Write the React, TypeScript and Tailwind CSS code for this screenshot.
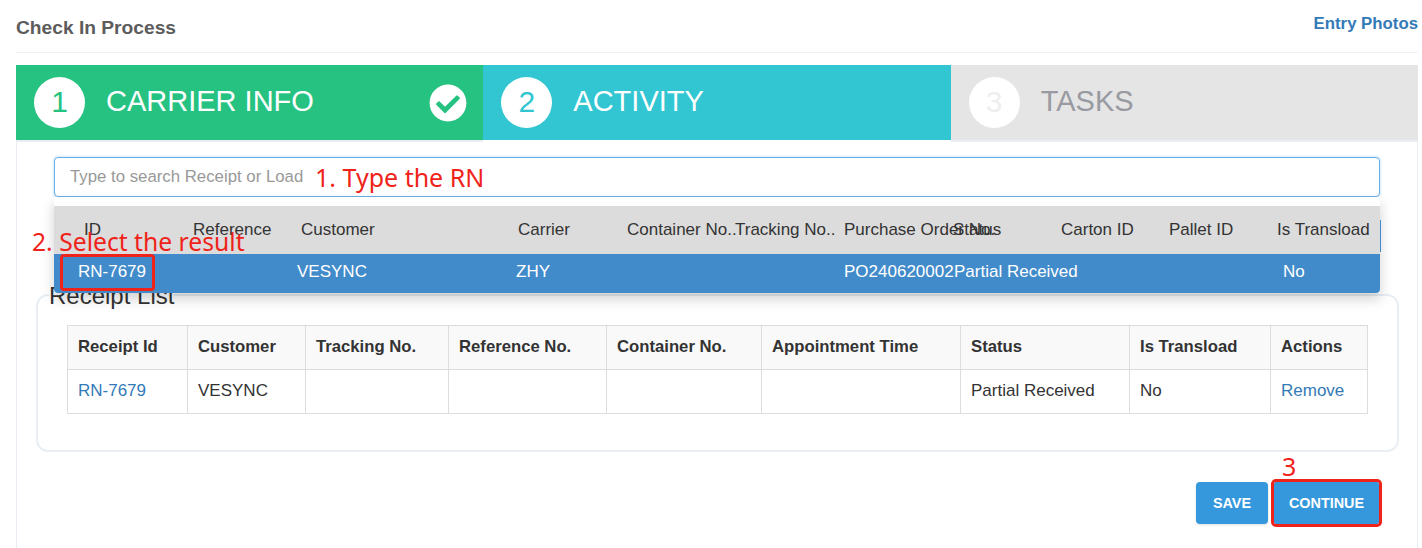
import { FaCheckCircle } from "react-icons/fa";

const headCols = [
  { label: "ID", w: "w-[109px]" },
  { label: "Reference", w: "w-[108px]" },
  { label: "Customer", w: "w-[217px]" },
  { label: "Carrier", w: "w-[109px]" },
  { label: "Container No..", w: "w-[108px]" },
  { label: "Tracking No..", w: "w-[109px]" },
  { label: "Purchase Order No.", w: "w-[109px]" },
  { label: "Status", w: "w-[108px]" },
  { label: "Carton ID", w: "w-[108px]" },
  { label: "Pallet ID", w: "w-[108px]" },
  { label: "Is Transload", w: "w-[92px]" },
];

const tableCols = [
  { label: "Receipt Id", w: "w-[120px]" },
  { label: "Customer", w: "w-[118px]" },
  { label: "Tracking No.", w: "w-[143px]" },
  { label: "Reference No.", w: "w-[158px]" },
  { label: "Container No.", w: "w-[155px]" },
  { label: "Appointment Time", w: "w-[199px]" },
  { label: "Status", w: "w-[169px]" },
  { label: "Is Transload", w: "w-[141px]" },
  { label: "Actions", w: "w-[97px]" },
];

function StepHead({ n, title, tone, children }: { n: string; title: string; tone: string; children?: React.ReactNode }) {
  const tones: Record<string, string> = {
    green: "bg-[#26c281] text-white border-[#e8eef3]",
    teal: "bg-[#32c5d2] text-white border-white",
    gray: "bg-[#e5e5e5] text-[#999aa1] border-[#e8eef3]",
  };
  const numTones: Record<string, string> = {
    green: "text-[#26c281]",
    teal: "text-[#32c5d2]",
    gray: "text-[#eeeeee]",
  };
  return (
    <div className={`flex h-[77px] flex-1 items-center border-b-2 pl-[18px] pr-4 ${tones[tone]}`}>
      <span className={`flex h-[51px] w-[51px] items-center justify-center rounded-full bg-white pb-[2px] text-[30px] ${numTones[tone]}`}>
        {n}
      </span>
      <span className="mb-[2px] ml-[21px] text-[29px]">{title}</span>
      {children}
    </div>
  );
}

export default function App() {
  return (
    <div className="relative h-[548px] w-[1422px] overflow-hidden bg-white pl-4 pr-1 font-['Liberation_Sans',Arial,sans-serif] text-[17px] text-[#333]">
      <div className="flex h-[53px] items-start justify-between border-b border-[#eef1f5]">
        <h1 className="mt-[16px] text-[19.2px] font-bold leading-[24px] text-[#5c5c5c]">Check In Process</h1>
        <a className="mt-[13px] text-[16.8px] font-bold leading-[22px] text-[#337ab7]">Entry Photos</a>
      </div>

      <div className="mt-3 flex">
        <StepHead n="1" title="CARRIER INFO" tone="green">
          <FaCheckCircle className="ml-auto text-white" size={38} />
        </StepHead>
        <StepHead n="2" title="ACTIVITY" tone="teal" />
        <StepHead n="3" title="TASKS" tone="gray" />
      </div>

      <div className="h-[406px] border-x border-[#e8eef3] pt-[15px]">
        <div className="relative mx-[37px]">
          <div className="flex h-[40px] items-center rounded border border-[#66afe9] bg-white pl-[15px] text-[16.8px] text-[#999] shadow-[0_0_3px_rgba(102,175,233,0.5)]">
            Type to search Receipt or Load
          </div>

          <div className="absolute left-0 right-0 top-[40px] z-10 bg-white pt-[9px] shadow-[0_6px_12px_rgba(0,0,0,0.18)]">
            <div className="relative flex h-[48px] items-center whitespace-nowrap bg-[#dcdcdc] pl-[30px]">
              {headCols.map((c) => (
                <div key={c.label} className={`shrink-0 ${c.w}`}>
                  {c.label}
                </div>
              ))}
              <span className="absolute bottom-[2px] right-[-1px] h-[32px] w-px bg-[#428bca]" />
            </div>
            <div className="relative flex h-[39px] items-center rounded-b-sm bg-[#428bca] pb-[4px] pl-[24px] text-white">
              <div className="w-[219px] shrink-0">RN-7679</div>
              <div className="w-[219px] shrink-0">VESYNC</div>
              <div className="w-[328px] shrink-0">ZHY</div>
              <div className="w-[110px] shrink-0">PO240620002</div>
              <div className="w-[329px] shrink-0">Partial Received</div>
              <div>No</div>
              <span className="absolute left-[6px] top-0 h-[37px] w-[95px] rounded-sm border-[3px] border-[#f0231a]" />
            </div>
          </div>
        </div>

        <fieldset className="mx-[19px] mt-[81px] rounded-xl border-2 border-[#e8eef3] px-[29px] pb-[36px]">
          <legend className="ml-[-18px] pt-[2px] text-[24px] leading-[32px] text-[#333]">Receipt List</legend>
          <table className="mt-[13px] w-[1300px] table-fixed border-collapse">
            <colgroup>
              {tableCols.map((c) => (
                <col key={c.label} className={c.w} />
              ))}
            </colgroup>
            <thead>
              <tr className="h-[44px] bg-[#f9f9f9]">
                {tableCols.map((c) => (
                  <th key={c.label} className="border border-[#ddd] pb-[2px] pl-[10px] text-left text-[16.7px] font-bold">
                    {c.label}
                  </th>
                ))}
              </tr>
            </thead>
            <tbody>
              <tr className="h-[44px]">
                <td className="border border-[#ddd] pb-[2px] pl-[10px] text-[#337ab7]">RN-7679</td>
                <td className="border border-[#ddd] pb-[2px] pl-[10px]">VESYNC</td>
                <td className="border border-[#ddd]" />
                <td className="border border-[#ddd]" />
                <td className="border border-[#ddd]" />
                <td className="border border-[#ddd]" />
                <td className="border border-[#ddd] pb-[2px] pl-[10px]">Partial Received</td>
                <td className="border border-[#ddd] pb-[2px] pl-[10px]">No</td>
                <td className="border border-[#ddd] pb-[2px] pl-[10px] text-[#337ab7]">Remove</td>
              </tr>
            </tbody>
          </table>
        </fieldset>

        <div className="mr-[38px] mt-[30px] flex justify-end gap-[6px]">
          <button className="h-[42px] w-[72px] rounded-sm bg-[#3598dc] pt-px text-[14.4px] font-bold text-white shadow-sm">SAVE</button>
          <button className="h-[42px] w-[105px] rounded-[2px] bg-[#3598dc] pt-px text-[14.4px] font-bold text-white outline-[3px] outline-[#f0231a]">
            CONTINUE
          </button>
        </div>
      </div>

      <span className="absolute left-[315px] top-[160px] z-20 font-['Noto_Sans',sans-serif] text-[25px] leading-[34px] text-[#f0231a]">
        1. Type the RN
      </span>
      <span className="absolute left-[32px] top-[225px] z-20 font-['Noto_Sans',sans-serif] text-[24.7px] leading-[34px] text-[#f0231a]">
        2. Select the result
      </span>
      <span className="absolute left-[1282px] top-[449px] z-20 font-['Noto_Sans',sans-serif] text-[25px] leading-[34px] text-[#f0231a]">
        3
      </span>
    </div>
  );
}
